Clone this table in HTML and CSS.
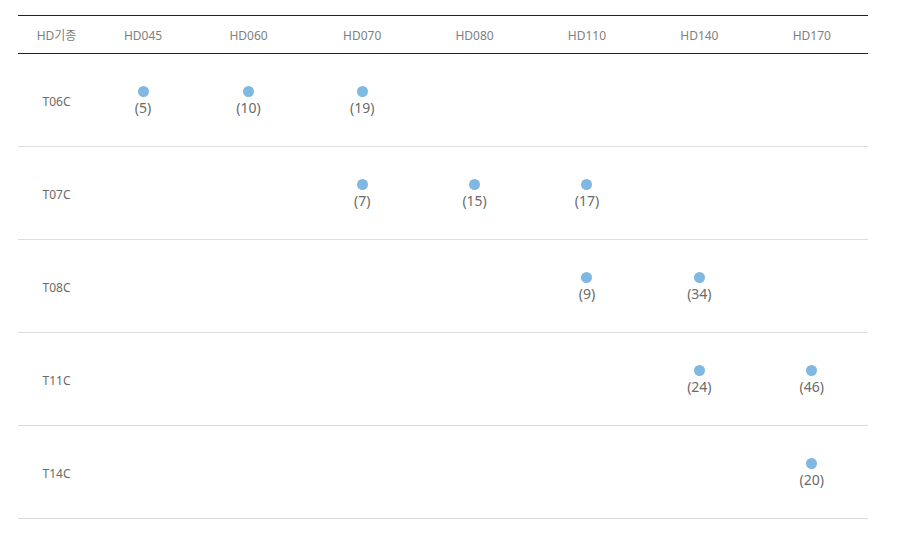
FILE: index.html
```html
<!DOCTYPE html>
<html lang="ko">
<head>
<meta charset="utf-8">
<title>HD</title>
<link rel="stylesheet" href="styles.css">
</head>
<body>
<table class="grid">
  <colgroup>
    <col class="c1"><col class="c2"><col class="c3"><col class="cn"><col class="cn"><col class="cn"><col class="cn"><col class="cn">
  </colgroup>
  <thead>
    <tr><th>HD기종</th><th>HD045</th><th>HD060</th><th>HD070</th><th>HD080</th><th>HD110</th><th>HD140</th><th>HD170</th></tr>
  </thead>
  <tbody>
    <tr><td class="lbl">T06C</td><td><span class="dot"></span><span class="num">(5)</span></td><td><span class="dot"></span><span class="num">(10)</span></td><td><span class="dot"></span><span class="num">(19)</span></td><td></td><td></td><td></td><td></td></tr>
    <tr><td class="lbl">T07C</td><td></td><td></td><td><span class="dot"></span><span class="num">(7)</span></td><td><span class="dot"></span><span class="num">(15)</span></td><td><span class="dot"></span><span class="num">(17)</span></td><td></td><td></td></tr>
    <tr><td class="lbl">T08C</td><td></td><td></td><td></td><td></td><td><span class="dot"></span><span class="num">(9)</span></td><td><span class="dot"></span><span class="num">(34)</span></td><td></td></tr>
    <tr><td class="lbl">T11C</td><td></td><td></td><td></td><td></td><td></td><td><span class="dot"></span><span class="num">(24)</span></td><td><span class="dot"></span><span class="num">(46)</span></td></tr>
    <tr><td class="lbl">T14C</td><td></td><td></td><td></td><td></td><td></td><td></td><td><span class="dot"></span><span class="num">(20)</span></td></tr>
  </tbody>
</table>
</body>
</html>
```
FILE: styles.css
```css
html, body {
  margin: 0;
  padding: 0;
  background: #fff;
}
body {
  font-family: "Noto Sans", "Noto Sans CJK KR", sans-serif;
  color: #666;
}
.grid {
  margin: 15px 0 0 18px;
  width: 850px;
  table-layout: fixed;
  border-collapse: collapse;
  border-top: 1px solid #222;
}
.c1 { width: 77px; }
.c2 { width: 96px; }
.c3 { width: 115px; }
.cn { width: 112.4px; }
.grid th {
  height: 36px;
  padding: 1px 0 0;
  font-size: 12px;
  font-weight: normal;
  color: #808080;
  text-align: center;
  vertical-align: middle;
  border-bottom: 1px solid #222;
}
.grid td {
  height: 90px;
  padding: 2px 0 0;
  text-align: center;
  vertical-align: middle;
  border-bottom: 1px solid #ddd;
}
.grid td.lbl {
  height: 89px;
  padding-top: 3px;
  font-size: 12px;
  color: #6a6a6a;
}
.dot {
  display: block;
  width: 11px;
  height: 11px;
  margin: 0 auto 2px;
  border-radius: 50%;
  background: #7fb8e1;
}
.num {
  display: block;
  font-size: 14px;
  line-height: 18px;
  color: #6a6a6a;
}
```
